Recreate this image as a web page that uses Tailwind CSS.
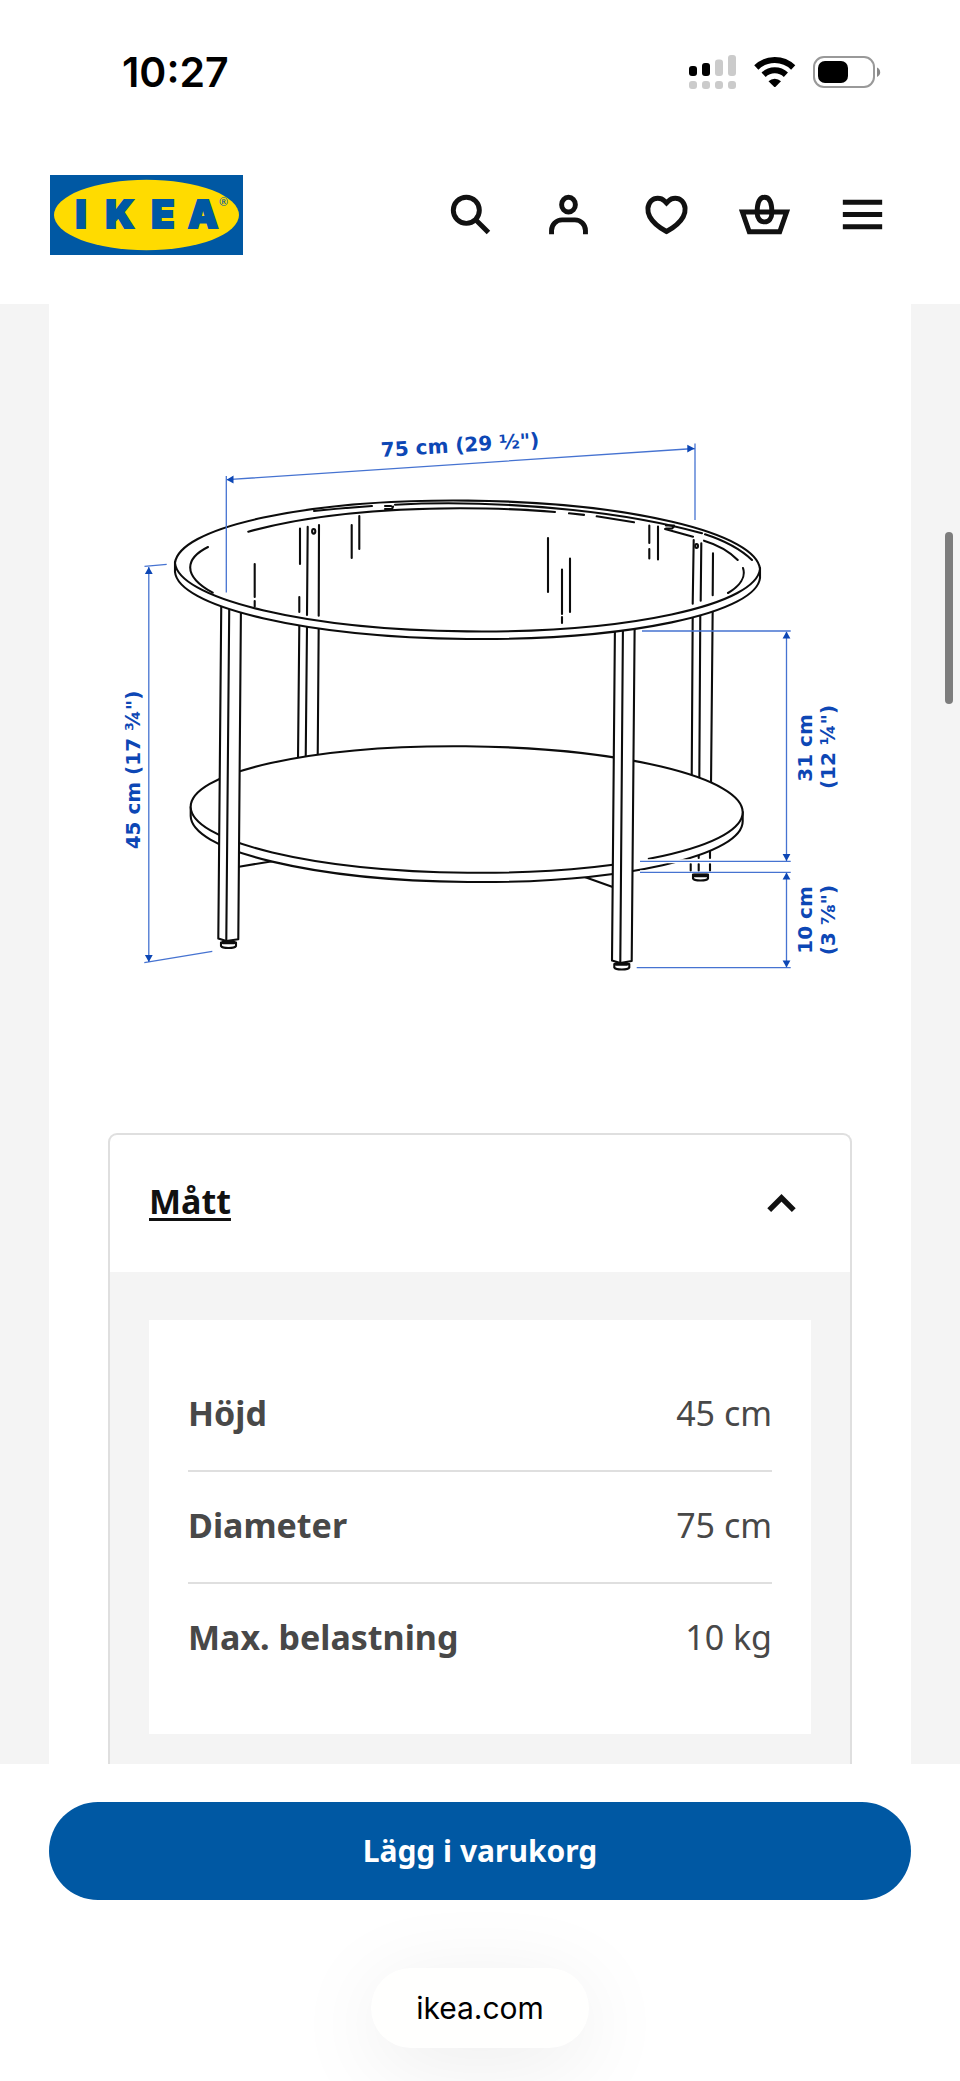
<!DOCTYPE html>
<html lang="sv">
<head>
<meta charset="utf-8">
<meta name="viewport" content="width=device-width, initial-scale=1">
<title>IKEA – Mått</title>
<script src="https://cdn.jsdelivr.net/npm/@tailwindcss/browser@4"></script>
</head>
<body class="flex min-h-screen flex-col bg-white font-['Noto_Sans',sans-serif] text-[#111]">

<!-- Phone status bar -->
<div class="flex h-[126px] items-center justify-between pt-[17px] pr-[79px] pl-[122px] font-['Inter',sans-serif] text-black">
  <span class="text-[41px] leading-[48px] font-semibold">10:27</span>
  <svg class="h-9 w-[193px]" viewBox="688 53 193 36" aria-hidden="true">
    <g fill="#000"><rect x="689" y="65" width="8" height="10" rx="3"/><rect x="702" y="62" width="8" height="13" rx="3"/></g>
    <g fill="#cbcbcb"><rect x="715" y="58.500" width="8" height="16.500" rx="3"/><rect x="728" y="54" width="8" height="21" rx="3"/>
      <rect x="689" y="80" width="8" height="8" rx="3"/><rect x="702" y="80" width="8" height="8" rx="3"/><rect x="715" y="80" width="8" height="8" rx="3"/><rect x="728" y="80" width="8" height="8" rx="3"/></g>
    <g fill="none" stroke="#000" stroke-width="6"><path d="M756.300 66.500a26.500 26.500 0 0 1 36.900 0"/><path d="M763.600 73.800a16.200 16.200 0 0 1 22.300 0"/></g>
    <path d="M768.500 80.200a9 9 0 0 1 12.500 0l-5.200 5.300q-1 1-2 0z"/>
    <rect x="814" y="56" width="60" height="30" rx="10" fill="none" stroke="#999" stroke-width="2"/>
    <rect x="818" y="60" width="30" height="22" rx="7"/>
    <path d="M877 66.500q3.200 1.500 3.200 4.700t-3.200 4.700z" fill="#888"/>
  </svg>
</div>

<header class="flex h-[178px] items-center justify-between pr-[49px] pl-[50px]">
  <a href="#" aria-label="IKEA">
    <svg class="h-20 w-[193px]" viewBox="0 0 193 80">
      <rect width="193" height="80" fill="#0058a3"/>
      <ellipse cx="96.500" cy="40" rx="92.500" ry="35.200" fill="#ffdb00"/>
      <g fill="#0058a3" stroke="#0058a3">
        <text x="31 70 113 153" y="53" font-family="Inter, sans-serif" font-weight="900" font-size="38" stroke-width="2" text-anchor="middle">IKEA</text>
        <text x="169" y="31" font-family="Noto Sans, sans-serif" font-size="11" stroke="none">®</text>
      </g>
    </svg>
  </a>
  <nav class="flex pb-[2px]">
    <button type="button" aria-label="Sök" class="flex w-[98px] justify-center"><svg class="size-[59px]" viewBox="0 0 24 24" fill="none" stroke="#111" stroke-width="2"><circle cx="10.300" cy="10.300" r="5.300"/><path d="m14.200 14.200 5.100 5.100"/></svg></button>
    <button type="button" aria-label="Mitt konto" class="flex w-[98px] justify-center"><svg class="size-[59px]" viewBox="0 0 24 24" fill="none" stroke="#111" stroke-width="2"><ellipse cx="12" cy="8" rx="2.800" ry="3"/><path d="M5.100 20v-1.500a4.300 4.300 0 0 1 4.300-4.300h5.200a4.300 4.300 0 0 1 4.300 4.300V20"/></svg></button>
    <button type="button" aria-label="Favoriter" class="flex w-[98px] justify-center"><svg class="size-[59px]" viewBox="0 0 24 24" fill="none" stroke="#111" stroke-width="2"><path d="m12 7.300-.8-.8c-1.500-1.500-4-1.500-5.500 0-1.500 1.600-1.700 4.200-.5 6.400 1.300 2.400 3.600 4.300 6.800 6 3.200-1.700 5.500-3.600 6.800-6 1.200-2.200 1-4.800-.5-6.400-1.500-1.500-4-1.500-5.500 0z"/></svg></button>
    <button type="button" aria-label="Varukorg" class="flex w-[98px] justify-center"><svg class="size-[59px]" viewBox="0 0 24 24" fill="none" stroke="#111" stroke-width="2"><path d="M3 11h18l-2.800 8H5.800z"/><path d="M12 5c-2.300 0-3 2.700-3 6.200C9 13.600 10.200 15 12 15s3-1.400 3-3.800C15 7.700 14.300 5 12 5z"/></svg></button>
    <button type="button" aria-label="Meny" class="flex w-[98px] justify-center"><svg class="size-[59px]" viewBox="0 0 24 24" fill="none" stroke="#111" stroke-width="2"><path d="M4 7h16M4 12h16M4 17h16"/></svg></button>
  </nav>
</header>

<main class="relative bg-[#f4f4f4] px-[49px]">
  <div class="bg-white">
    <!-- Dimension drawing of the coffee table -->
    <svg class="block w-full" viewBox="49 304 862 829" role="img" aria-label="Måttskiss av soffbord">
      <g fill="none" stroke="#0c0c0c" stroke-width="2.100" stroke-linecap="round" stroke-linejoin="round">
        <!-- rear legs -->
        <path d="M299.300 626 298 760M307 626 305.700 760M318.700 626 317.700 758M692.700 616 691.700 780M700.300 612 699.300 782M712.700 608 711 786"/>
        <path d="M690.700 850V857M690.700 864V870.500M698.700 850V858M698.700 864V870.500M710 846V858M710 864V870.500"/>
        <path d="M693 874.500h15v4q-1 2-7.500 2t-7.500-2z" fill="#fff"/><path d="M694 875.500h13" stroke-width="3.500"/>
        <!-- brackets -->
        <path d="M239 866.700 274 861M584 876.700 612 886.700"/>
        <!-- lower shelf -->
        <path d="M190.700 807V816A276 63.500 .6 0 0 742.700 821V812" fill="#fff"/>
        <path d="M190.700 807A276 63.200 .6 0 1 742.700 812A276 63.200 .6 0 1 190.700 807Z" fill="#fff"/>
        <path d="M632 861.500 646 859" stroke="#fff" stroke-width="4"/>
        <!-- front legs -->
        <path d="M221.300 600 218.300 938.500 226.300 941 238.300 939.300 241 600" fill="#fff"/><path d="M229.300 600 226.300 940"/>
        <path d="M615 620 612 960.500 620.300 963 631.700 961 634.700 620" fill="#fff"/><path d="M623 620 620.300 963"/>
        <path d="M221 942.500h15v3.500q-1 2-7.500 2t-7.500-2z" fill="#fff"/><path d="M223 942.500h11" stroke-width="3.500"/>
        <path d="M614.300 964h15v3.500q-1 2-7.500 2t-7.500-2z" fill="#fff"/><path d="M616 964h11" stroke-width="3.500"/>
        <!-- glass top -->
        <path d="M175 562V572A292.600 65.500 .6 0 0 760 578V568" fill="#fff"/>
        <path d="M175 563A292.600 67 .6 0 1 760 569A292.600 67 .6 0 1 175 563Z" fill="#fff"/>
        <path d="M314 511Q342 508 372 506M395 504.700C455 501.500 515 504 573 510S670 524.500 702 533.300M705 534.300Q735 544 752 560"/>
        <path d="M248.300 531.700C300 517.500 370 508.500 460 508.300Q515 508.300 555 512M569 513.300 584 514.900M596.700 516.300 634 522.300M665 529 693 536.700M704 540.700Q725 547 737.700 560M743 568C746 577 740 586 728 593M208 547C186 558 181 575 212.700 592.700"/>
        <path d="M385 506h6M385 509h7l1-2.500M666 525.500h8M666 528.500h6l2-2"/>
        <!-- legs seen through the glass, and reflections -->
        <path d="M307.700 526.700 307 615M319 525 318.700 615.700M693.700 540 692.700 603.700M701.300 543.300 700.700 600.700M713 553.300 712.700 595.300"/>
        <ellipse cx="313.700" cy="531.300" rx="1.600" ry="2.300"/><ellipse cx="696.600" cy="546" rx="1.400" ry="2"/>
        <path d="M254.700 564V597M254.700 601V606.500M300 528.500V564M299.300 597V612M351.700 525V558M359.300 516V549M548 538V592M562 569.500V614M562 617V623M570 558.500V612M649.300 525.500V543M649.300 549V558.500M658 526.500V559.500"/>
      </g>
      <!-- dimension lines -->
      <g fill="none" stroke="#fff" stroke-width="4"><path d="M640 861.300H740M640 872.300H680"/></g>
      <g fill="none" stroke="#4673d1" stroke-width="1.300">
        <path d="M226.300 476V592.500M695 443.500V520M227 479.700 694.500 448.500M148.800 567V962M144.500 566.300 166.700 564.300M144.300 962.700 212.300 951.300"/>
        <path d="M642 631H790.700M640 861.300H790.700M640 872.300H790.700M636.700 967.700H790.700M786.500 632V861M786.500 873V967"/>
      </g>
      <g fill="#0d47b5">
        <path d="M226.700 479.700 233.500 475.600V483.400ZM694.500 448.500 687.300 444.800V452.500ZM148.800 567 144.900 574H152.700ZM148.800 962 144.900 955H152.700Z"/>
        <path d="M786.500 631.500 782.600 638.500H790.400ZM786.500 861 782.600 854H790.400ZM786.500 872.500 782.600 879.500H790.400ZM786.500 967.500 782.600 960.500H790.400Z"/>
      </g>
      <g fill="#0d47b5" font-family="Verdana, DejaVu Sans, sans-serif" font-weight="700" font-size="20" text-anchor="middle">
        <text transform="translate(460.500 452) rotate(-3.700)">75 cm (29 ½")</text>
        <text transform="translate(139.500 770) rotate(-90)">45 cm (17 ¾")</text>
        <text transform="translate(812 748) rotate(-90)">31 cm</text>
        <text transform="translate(834.500 747) rotate(-90)">(12 ¼")</text>
        <text transform="translate(812 920) rotate(-90)">10 cm</text>
        <text transform="translate(834.500 920) rotate(-90)">(3 ⅞")</text>
      </g>
    </svg>

    <section class="mx-[59px] rounded-t-[9px] border-x-2 border-t-2 border-[#dfdfdf]">
      <h2>
        <button type="button" aria-expanded="true" aria-controls="matt" class="flex h-[137px] w-full items-center justify-between px-[39px] pb-[2px] text-left">
          <span class="pb-1 text-[34px] leading-[46px] font-bold underline decoration-[3px] underline-offset-[4px]">Mått</span>
          <svg class="size-[59px]" viewBox="0 0 24 24" fill="none" stroke="#111" stroke-width="2.200" aria-hidden="true"><path d="m7 15.100 5-5 5 5"/></svg>
        </button>
      </h2>
      <div id="matt" class="bg-[#f4f4f4] px-[39px] pt-12 pb-[30px]">
        <div class="bg-white px-[39px] py-10">
          <table class="w-full text-[34px] leading-[54px] text-[#484848]">
            <tbody>
              <tr class="border-b-2 border-[#dfdfdf]"><th scope="row" class="pt-[26px] pb-[30px] text-left font-bold">Höjd</th><td class="pt-[26px] pb-[30px] text-right">45 cm</td></tr>
              <tr class="border-b-2 border-[#dfdfdf]"><th scope="row" class="pt-[26px] pb-[30px] text-left font-bold">Diameter</th><td class="pt-[26px] pb-[30px] text-right">75 cm</td></tr>
              <tr><th scope="row" class="pt-[26px] pb-[30px] text-left font-bold">Max. belastning</th><td class="pt-[26px] pb-[30px] text-right">10 kg</td></tr>
            </tbody>
          </table>
        </div>
      </div>
    </section>
  </div>
  <!-- Scroll indicator -->
  <div class="absolute top-[228px] right-[7px] h-[172px] w-2 rounded-full bg-[#7d7d7d]"></div>
</main>

<footer class="flex flex-1 flex-col items-center overflow-hidden bg-white px-[49px] pt-[38px]">
  <button type="button" class="h-[98px] w-full rounded-full bg-[#0058a3] text-[30px] leading-10 font-bold text-white">Lägg i varukorg</button>
  <a href="https://ikea.com" class="mt-[68px] rounded-full bg-[#fffffe] px-[45px] py-5 font-['Inter',sans-serif] text-[30px] leading-10 text-black shadow-[0_16px_90px_rgba(0,0,0,0.08)]">ikea.com</a>
</footer>
</body>
</html>
